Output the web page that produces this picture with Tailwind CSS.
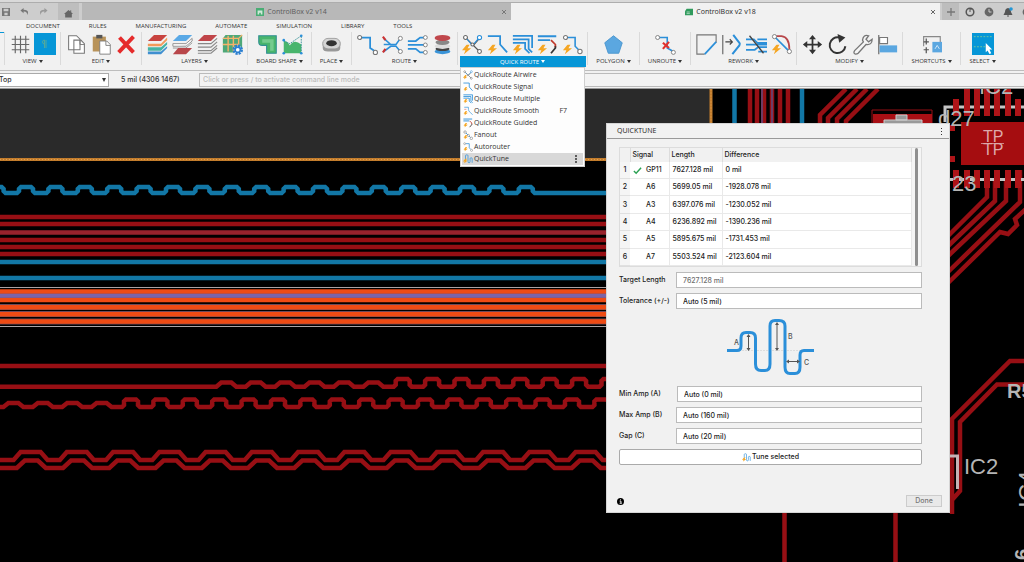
<!DOCTYPE html>
<html lang="en">
<head>
<meta charset="utf-8">
<title>ControlBox v2 v18</title>
<script src="https://cdn.jsdelivr.net/npm/@tailwindcss/browser@4"></script>
</head>
<body class="h-screen overflow-hidden flex flex-col bg-black font-['Open_Sans','Noto_Sans',sans-serif] text-[#333] text-[7px] leading-[10px]">

<!-- shared icon pieces -->
<svg class="hidden">
  <symbol id="bolt" viewBox="0 0 10 10"><path d="M5 0 0 6h3.600L2 10l7.500-6H5.800L8 0z" fill="#f5a623"/></symbol>
  <symbol id="airwire" viewBox="0 0 24 24"><path d="M5 5 20 20M13 13 20 5" stroke="#555" stroke-width="1.400" fill="none"/><path d="M5 5l7 8 7-8" stroke="#2b8fd9" stroke-width="1.300" fill="none"/><g fill="#fff" stroke="#666" stroke-width="1.200"><circle cx="4" cy="4" r="2.200"/><circle cx="20" cy="4" r="2.400" stroke="#2b8fd9"/><circle cx="20" cy="20" r="2.200"/><circle cx="12" cy="12" r="1.800"/></g><use href="#bolt" x="0" y="12" width="11" height="11"/></symbol>
  <symbol id="signal" viewBox="0 0 24 24"><path d="M1 2.500H15V12l8 9" stroke="#2b8fd9" stroke-width="2" fill="none"/><use href="#bolt" x="1" y="12" width="11" height="11"/></symbol>
  <symbol id="multiple" viewBox="0 0 24 24"><path d="M1 2H23V16M1 6H19V17l4 4M1 10H15v7l5 5" stroke="#2b8fd9" stroke-width="2" fill="none"/><use href="#bolt" x="1" y="12" width="11" height="11"/></symbol>
  <symbol id="guided" viewBox="0 0 24 24"><path d="M1 2.500H22M1 7H15" stroke="#2b8fd9" stroke-width="2.200" fill="none"/><path d="M16 7l5 5v3" stroke="#c0392b" stroke-width="2" fill="none"/><path d="M21 14v2l-5 6" stroke="#333" stroke-width="2" fill="none"/><use href="#bolt" x="1" y="12" width="11" height="11"/></symbol>
  <symbol id="auto" viewBox="0 0 24 24"><path d="M6 4H15V14l4 4" stroke="#2b8fd9" stroke-width="1.800" fill="none"/><g fill="#fff" stroke="#777" stroke-width="1.200"><circle cx="4" cy="4" r="2.300"/><circle cx="20.500" cy="20" r="2.500"/></g><use href="#bolt" x="1" y="12" width="11" height="11"/></symbol>
  <symbol id="fanout" viewBox="0 0 24 24"><path d="M5 5l14 14" stroke="#2b8fd9" stroke-width="2" fill="none"/><g fill="#fff" stroke="#777" stroke-width="1.400"><circle cx="5" cy="5" r="3"/><circle cx="13" cy="13" r="2.500"/><circle cx="20" cy="20" r="3"/></g><use href="#bolt" x="1" y="12" width="11" height="11"/></symbol>
  <symbol id="smooth" viewBox="0 0 24 24"><path d="M3 3h10v5q0 4 4 7l6 6" stroke="#2b8fd9" stroke-width="1.600" fill="none"/><path d="M3 8h5" stroke="#d66" stroke-width="1.500"/><use href="#bolt" x="1" y="12" width="11" height="11"/></symbol>
  <symbol id="tune" viewBox="0 0 24 24"><path d="M6 13V4q0-2 3-2t3 2v14q0 3 2.500 3t2.500-3v-7q0-2 2.500-2t2.500 2v10" stroke="#2b8fd9" stroke-width="1.700" fill="none"/><use href="#bolt" x="0" y="11" width="12" height="12"/></symbol>
</svg>

<!-- document tabs -->
<header class="flex shrink-0 h-5 pt-[2px] bg-[#d9d9d9]">
  <div class="flex flex-1 border-t border-[#adadad] bg-[#cdcdcd]">
    <div class="flex items-center gap-[10px] w-[58px] pl-[2px] text-[#777]">
      <button aria-label="Save"><svg class="size-2" viewBox="0 0 10 10"><path d="M0 0h10v10H0z" fill="#777"/><path d="M2 1h6v3H2zM3 6h4v3H3z" fill="#ccc"/></svg></button>
      <button aria-label="Undo"><svg class="size-[9px]" viewBox="0 0 10 10"><path d="M4 1 0.500 4 4 7V5q4-.500 4 4 3-6-4-6z" fill="#777"/></svg></button>
      <button aria-label="Redo"><svg class="size-[9px]" viewBox="0 0 10 10"><path d="M6 1l3.500 3L6 7V5q-4-.500-4 4-3-6 4-6z" fill="#999"/></svg></button>
    </div>
    <button aria-label="Home" class="flex w-[21px] items-center justify-center bg-[#bebebe]"><svg class="mt-1 size-[9px]" viewBox="0 0 10 10"><path d="M5 1 0 5.500h1.300V9.500h7.400V5.500H10L8 3.700V1.500H7v1.300z" fill="#666"/></svg></button>
    <div class="ml-[3px] flex flex-1 items-center bg-[#b8b8b8] pr-1">
      <div class="flex flex-1 items-center justify-center gap-[3px] font-['Noto_Sans',sans-serif] text-[#5f5f5f]"><svg class="size-2" viewBox="0 0 10 10"><path d="M0 0h10v10H0z" fill="#49ad74"/><path d="M2 3h6v5H6V6H4v2H2z" fill="#cfe8d9"/></svg><a href="#">ControlBox v2 v14</a></div>
      <button aria-label="Close tab"><svg class="size-[6px]" viewBox="0 0 6 6"><path d="M1 1l4 4M5 1 1 5" stroke="#777"/></svg></button>
    </div>
    <div class="flex flex-1 items-center bg-[#f1f1f1] pr-1">
      <div class="flex flex-1 items-center justify-center gap-[3px] font-['Noto_Sans',sans-serif]"><svg class="size-2" viewBox="0 0 10 10"><path d="M2 1h8v8H0V4z" fill="#2f9a5c"/><path d="M2 5h4M2 7h4" stroke="#bfe2cd"/></svg><a href="#">ControlBox v2 v18</a></div>
      <button aria-label="Close tab"><svg class="size-[6px]" viewBox="0 0 6 6"><path d="M1 1l4 4M5 1 1 5" stroke="#666"/></svg></button>
    </div>
    <div class="flex w-[84px] shrink-0 items-center gap-[9px] pl-[2px] [&>button]:shrink-0">
      <button aria-label="New tab" class="flex h-full w-[17px] items-center justify-center bg-[#bdbdbd]"><svg class="size-2" viewBox="0 0 8 8"><path d="M4 0v8M0 4h8" stroke="#777" stroke-width="1.300"/></svg></button>
      <button aria-label="Extensions" class="-ml-[3px]"><svg class="size-[10px]" viewBox="0 0 10 10"><circle cx="5" cy="5" r="3.800" fill="none" stroke="#555" stroke-width="1.500"/><path d="M5 5V2h2" stroke="#555" fill="none"/></svg></button>
      <button aria-label="Job status"><svg class="size-[10px]" viewBox="0 0 10 10"><circle cx="5" cy="5" r="4.400" fill="#666"/><path d="M5 2v3h2.500" stroke="#ccc" fill="none"/></svg></button>
      <button aria-label="Notifications"><svg class="size-[10px]" viewBox="0 0 10 10"><path d="M5 1Q2 1.500 2 5L.500 8h9L8 5Q8 1.500 5 1zM4 8.500h2v1H4z" fill="#555"/><circle cx="8" cy="2" r="1.800" fill="#2196d6"/></svg></button>
      <button aria-label="Account"><svg class="size-[10px]" viewBox="0 0 10 10"><circle cx="5" cy="5" r="4.400" fill="#666"/></svg></button>
    </div>
  </div>
</header>

<!-- ribbon -->
<nav class="flex shrink-0 h-3 items-center gap-[29px] bg-[#f1f1f1] pl-[26px] text-[6px]">
  <a href="#">DOCUMENT</a><a href="#">RULES</a><a href="#">MANUFACTURING</a><a href="#">AUTOMATE</a><a href="#">SIMULATION</a><a href="#">LIBRARY</a><a href="#">TOOLS</a>
</nav>
<section class="relative z-10 flex shrink-0 h-[39px] border-b border-[#bdbdbd] bg-[#f1f1f1] text-center text-[6px] [&>div]:flex [&>div]:shrink-0 [&>div]:flex-col [&>div]:items-center [&>div>div]:flex [&>div>div]:gap-[2px] [&>div>div]:h-6 [&>div>div]:items-center [&_svg.i]:size-[21px] [&_svg.i]:mx-[1px] [&_button]:whitespace-nowrap [&_i.a]:ml-[2px] [&_i.a]:inline-block [&_i.a]:align-middle [&_i.a]:border-x-[2px] [&_i.a]:border-t-[3px] [&_i.a]:border-x-transparent [&>i]:w-px [&>i]:h-[33px] [&>i]:bg-[#dadada] [&>i]:shrink-0">
  <div class="w-1"><b class="h-px w-full bg-[#0696d7]"></b></div><i></i>
  <div class="w-[55px]"><div>
    <svg class="i" viewBox="0 0 24 24"><path d="M6 2v20M12 2v20M18 2v20M2 6h20M2 12h20M2 18h20" stroke="#666" stroke-width="1.300"/></svg>
    <button aria-label="Snap" class="flex size-[22px] items-center justify-center bg-[#0696d7]"><svg class="size-3" viewBox="0 0 12 12"><path d="M7 2v8M5.500 2v8M5.500 2q-2 0-2 2t2 2" stroke="#54a99b" fill="none"/></svg></button>
  </div><button>VIEW<i class="a"></i></button></div><i></i>
  <div class="w-[80px]"><div>
    <svg class="i" viewBox="0 0 24 24"><path d="M3 2h9l4 4v12H3zM9 7h8l4 4v11H9z" fill="#fff" stroke="#777" stroke-width="1.200"/><path d="M16 7v5h5" fill="none" stroke="#777"/></svg>
    <svg class="i" viewBox="0 0 24 24"><path d="M2 3h15v17H2z" fill="#b8935a"/><path d="M6 1h7v4H6z" fill="#555"/><path d="M10 8h8l4 4v11H10z" fill="#fff" stroke="#777"/><path d="M17 8v5h5" fill="none" stroke="#777"/></svg>
    <svg class="i" viewBox="0 0 24 24"><path d="M4 4l16 17M20 3 3 21" stroke="#e52b2b" stroke-width="4.500"/></svg>
  </div><button>EDIT<i class="a"></i></button></div><i></i>
  <div class="w-[105px]"><div>
    <svg class="i" viewBox="0 0 24 24"><path d="M8 1h15l-7 7H1z" fill="#c8433f"/><path d="M1 11h15l7-7v3l-7 7H1z" fill="#f39a5b"/><path d="M1 15h15l7-6v3l-7 7H1z" fill="#46b4a5"/><path d="M1 20h15l7-6v2l-7 7H1z" fill="#3f8fd0"/></svg>
    <svg class="i" viewBox="0 0 24 24"><path d="M8 1h15l-7 7H1z" fill="#5aa9e6"/><path d="M1 11h15l7-6v3l-7 6H1z M1 16h15l7-6" fill="#fff" stroke="#888"/><path d="M7 16h16l-7 7H1z" fill="#b8474b"/></svg>
    <svg class="i" viewBox="0 0 24 24"><path d="M8 1h15l-7 7H1z" fill="#c04549"/><path d="M1 11h15l7-6M1 15h15l7-6M1 19h15l7-6M1 22h15l7-6" fill="none" stroke="#888" stroke-width="1.300"/></svg>
    <svg class="i" viewBox="0 0 24 24"><path d="M4 1h19v16l-4 4H1V5z" fill="#4da878"/><path d="M1 5h18v16M19 5l4-4M7 2v18M13 2v18M1 12h18" stroke="#f6b26b" stroke-width="1.600" fill="none"/><circle cx="18" cy="18" r="4.500" fill="#fff" stroke="#2b7fd0" stroke-width="3" stroke-dasharray="2.400 1.100"/><circle cx="18" cy="18" r="3" fill="none" stroke="#2b7fd0" stroke-width="1.800"/></svg>
  </div><button>LAYERS<i class="a"></i></button></div><i></i>
  <div class="w-[63px]"><div>
    <svg class="i" viewBox="0 0 24 24"><path d="M2 2h20v20H11V13H6q-4 0-4-4z" fill="#48b56c" stroke="#2f8f93" stroke-width="1.200"/><path d="M6 6h13v13h-4v-9H6z" fill="#75cb8f"/></svg>
    <svg class="i" viewBox="0 0 24 24"><path d="M2 22V8q4 0 7 5Q14 5 22 12v10z" fill="#48b56c"/><path d="M2 8l7 3L22 2V22" stroke="#2f8f93" stroke-dasharray="2 1" fill="none"/><g fill="#2b8fd9"><circle cx="2" cy="7" r="1.500"/><circle cx="22" cy="2" r="1.500"/><circle cx="2" cy="22" r="1.500"/><circle cx="22" cy="22" r="1.500"/></g></svg>
  </div><button>BOARD SHAPE<i class="a"></i></button></div><i></i>
  <div class="w-[39px]"><div>
    <svg class="i" viewBox="0 0 24 24"><path d="M2 9v7q0 4 6 4h8q6 0 6-4V9z" fill="#999"/><rect x="2" y="5" width="20" height="12" rx="6" fill="#d5d5d5" stroke="#999"/><ellipse cx="12" cy="10.500" rx="6" ry="3.500" fill="#333"/></svg>
  </div><button>PLACE<i class="a"></i></button></div><i></i>
  <div class="w-[105px]"><div>
    <svg class="i" viewBox="0 0 24 24"><path d="M4 4h11v12l6 4" stroke="#2b8fd9" stroke-width="2" fill="none"/><g fill="#fff" stroke="#777" stroke-width="1.200"><circle cx="3" cy="4" r="2.300"/><circle cx="21" cy="21" r="2.400"/></g></svg>
    <svg class="i" viewBox="0 0 24 24"><path d="M2 5l8 7h6l5-7M2 20l8-6h6l5 6M2 12h8" stroke="#2b8fd9" stroke-width="1.800" fill="none"/><path d="M1 3l3 4M1 21l3-4" stroke="#c33" stroke-width="2.500"/><g fill="#fff" stroke="#777"><circle cx="21" cy="5" r="2.300"/><circle cx="21" cy="20" r="2.300"/></g></svg>
    <svg class="i" viewBox="0 0 24 24"><path d="M1 8h9l5-4h5M1 12.500h19M1 17h9l5 4h5" stroke="#2b8fd9" stroke-width="2" fill="none"/><g fill="#fff" stroke="#777"><circle cx="21" cy="4" r="2.200"/><circle cx="21" cy="12.500" r="2.200"/><circle cx="21" cy="21" r="2.200"/></g></svg>
    <svg class="i" viewBox="0 0 24 24"><rect x="8" y="4" width="8" height="17" fill="#999"/><ellipse cx="12" cy="20" rx="9" ry="3" fill="#3a94d8"/><ellipse cx="12" cy="17" rx="8" ry="2.500" fill="#444"/><ellipse cx="12" cy="14" rx="9" ry="3" fill="#ddd"/><ellipse cx="12" cy="9.500" rx="8" ry="3" fill="#888"/><ellipse cx="12" cy="4.500" rx="9" ry="3.500" fill="#c0474c"/></svg>
  </div><button>ROUTE<i class="a"></i></button></div><i></i>
  <div class="relative w-[129px]"><div>
    <svg class="i"><use href="#airwire"/></svg><svg class="i"><use href="#signal"/></svg><svg class="i"><use href="#multiple"/></svg><svg class="i"><use href="#guided"/></svg><svg class="i"><use href="#auto"/></svg>
  </div><button class="h-[11px] w-[126px] bg-[#0696d7] text-white">QUICK ROUTE<i class="a"></i></button>
    <ul class="absolute top-[35px] left-[2px] w-[125px] border border-[#cfcfcf] bg-[#fdfdfd] p-px text-left text-[7px] leading-[12px] [&_button]:flex [&_button]:h-3 [&_button]:w-full [&_button]:items-center [&_button]:gap-px [&_button]:pl-px [&_svg]:size-[10px]">
      <li><button><svg><use href="#airwire"/></svg>QuickRoute Airwire</button></li>
      <li><button><svg><use href="#signal"/></svg>QuickRoute Signal</button></li>
      <li><button><svg><use href="#multiple"/></svg>QuickRoute Multiple</button></li>
      <li><button><svg><use href="#smooth"/></svg>QuickRoute Smooth<span class="ml-auto pr-4">F7</span></button></li>
      <li><button><svg><use href="#guided"/></svg>QuickRoute Guided</button></li>
      <li><button><svg><use href="#fanout"/></svg>Fanout</button></li>
      <li><button><svg><use href="#auto"/></svg>Autorouter</button></li>
      <li><button class="bg-[#d8d8d8]"><svg><use href="#tune"/></svg>QuickTune<span class="ml-auto flex flex-col gap-px pr-[6px]"><b class="size-[2px] rounded-full bg-[#333]"></b><b class="size-[2px] rounded-full bg-[#333]"></b><b class="size-[2px] rounded-full bg-[#333]"></b></span></button></li>
    </ul>
  </div><i></i>
  <div class="w-[51px]"><div><svg class="i" viewBox="0 0 24 24"><path d="M12 2l10 8-4 12H6L2 10z" fill="#5ba7e0" stroke="#4592cd"/></svg></div><button>POLYGON<i class="a"></i></button></div><i></i>
  <div class="w-[50px]"><div><svg class="i" viewBox="0 0 24 24"><path d="M4 4h10v12l7 4" stroke="#2b8fd9" stroke-width="1.800" fill="none"/><g fill="#fff" stroke="#777"><circle cx="3" cy="4" r="2.300"/><circle cx="21" cy="21" r="2.300"/></g><path d="M9 10l7 6M16 9l-7 8" stroke="#e0322f" stroke-width="2.500"/></svg></div><button>UNROUTE<i class="a"></i></button></div><i></i>
  <div class="w-[105px]"><div>
    <svg class="i" viewBox="0 0 24 24"><path d="M10 23H1V1h22v9" stroke="#777" stroke-width="1.300" fill="none"/><path d="M23 9 10 23" stroke="#2b8fd9" stroke-width="2"/></svg>
    <svg class="i" viewBox="0 0 24 24"><path d="M2 1v22" stroke="#777" stroke-width="1.500"/><path d="M14 1l7 9q1 1 0 3l-8 10" stroke="#2b8fd9" stroke-width="2.300" fill="none"/><path d="M5 9h8M10 6l3 3-3 3" stroke="#444" stroke-width="1.300" fill="none"/></svg>
    <svg class="i" viewBox="0 0 24 24"><path d="M0 6h9l4 4h11M0 12h24M0 18h10l4-3h10M13 6h11M14 20h10" stroke="#2b8fd9" stroke-width="2" fill="none"/><path d="M4 2l16 20" stroke="#444" stroke-width="1.500"/></svg>
    <svg class="i" viewBox="0 0 24 24"><path d="M5 4l15 15" stroke="#2b8fd9" stroke-width="2"/><path d="M6 2.500h6q9 1 9 15" stroke="#b8474b" stroke-width="2" fill="none"/><g fill="#fff" stroke="#777"><circle cx="4" cy="3" r="2.400"/><circle cx="21" cy="20" r="2.400"/></g><use href="#bolt" x="1" y="12" width="11" height="11"/></svg>
  </div><button>REWORK<i class="a"></i></button></div><i></i>
  <div class="w-[105px]"><div>
    <svg class="i" viewBox="0 0 24 24"><path d="M12 4v16M4 12h16" stroke="#333" stroke-width="2"/><path d="M12 1l4 5H8zM12 23l4-5H8zM1 12l5-4v8zM23 12l-5-4v8z" fill="#333"/></svg>
    <svg class="i" viewBox="0 0 24 24"><path d="M14 4A9 9 0 1 0 21 14" stroke="#333" stroke-width="2.200" fill="none"/><path d="M12 0l9 4-7 6z" fill="#333"/></svg>
    <svg class="i" viewBox="0 0 24 24"><path d="M19 2q-6-2-7 5l1 2-10 10q-2 3 1 4 2 0 3-1l9-10q7 1 7-6l-4 3-3-3z" fill="#f5f5f5" stroke="#777" stroke-width="1.500"/></svg>
    <svg class="i" viewBox="0 0 24 24"><path d="M2 1v22" stroke="#777" stroke-width="1.500"/><path d="M3 4h9v7H3z" fill="#fff" stroke="#777" stroke-width="1.300"/><path d="M3 13h20v8H3z" fill="#5ba7e0"/></svg>
  </div><button>MODIFY<i class="a"></i></button></div><i></i>
  <div class="w-[57px]"><div><svg class="i" viewBox="0 0 24 24"><path d="M3 14V3h19v6" stroke="#888" stroke-width="1.300" fill="none"/><path d="M6 5v7M3 9h6M6 15v7M3 18h6" stroke="#555" stroke-width="1.400"/><path d="M13 9h11v12H13z" fill="#5ba7e0"/><path d="M16 17l2.500-4 2.500 4" stroke="#dceefb" fill="none"/></svg></div><button>SHORTCUTS<i class="a"></i></button></div><i></i>
  <div class="w-[43px]"><div><svg class="size-[22px]" viewBox="0 0 24 24"><path d="M0 0h24v24H0z" fill="#0696d7"/><path d="M2 4h20M2 15h13" stroke="#76c49a" stroke-dasharray="2 1.500"/><path d="M15 11v10l2-2 2 4 2-1-2-4h3z" fill="#fff"/></svg></div><button>SELECT<i class="a"></i></button></div>
</section>

<!-- layer and command line -->
<form class="flex shrink-0 h-[18px] items-center border-b border-[#999] bg-[#f1f1f1] font-['Inter',sans-serif] font-medium">
  <div class="relative h-[14px] w-[110px]"><select aria-label="Layer" class="-ml-px h-full w-full appearance-none border border-[#aaa] border-l-0 bg-white"><option>Top</option></select><svg class="absolute top-[5px] right-1 size-1" viewBox="0 0 4 4"><path d="M0 0h4L2 4z" fill="#333"/></svg></div>
  <output class="w-[89px] pl-[11px]">5 mil (4306 1467)</output>
  <input aria-label="Command line" placeholder="Click or press / to activate command line mode" class="h-[14px] min-w-0 flex-1 border border-r-0 border-[#bbb] bg-[#f3f3f3] px-[3px] placeholder:text-[#bcbcbc]">
</form>

<!-- board canvas -->
<main class="relative min-h-0 flex-1 overflow-hidden bg-black">
  <svg class="absolute top-0 left-0 h-[473px] w-[1024px]" viewBox="0 89 1024 473" fill="none">
    <path d="M0 89H710V159H0z" fill="#2a2a2a"/>
    <path d="M0 159.500H711V89" stroke="#c27c2c" stroke-width="3"/><path d="M0 159.500H711V89" stroke="#e0a050" stroke-dasharray="1 2"/>
    <g stroke="#970f14" stroke-width="4.500">
      <path d="M0 217H610M0 224H610M0 240H610M0 247H610M0 254H610M0 366H610"/>
      <path d="M0 232.500H610" stroke="#98222c"/>
      <path id="wave-b"/><path id="wave-c"/><path id="wave-d"/><path id="wave-e"/>
    </g>
    <path d="M0 262H610M0 278H610" stroke="#1277a6" stroke-width="4.500"/>
    <path id="wave-a" stroke="#1277a6" stroke-width="4.500"/>
    <path d="M0 287.500H610M0 326.500H610" stroke="#a9a3a5"/>
    <path d="M0 296H610M0 307H610M0 314H610M0 321.500H610" stroke="#6d4a5a" stroke-width="6"/>
    <path d="M0 291.500H610M0 300H610M0 307.300H610M0 314.300H610M0 321.500H610" stroke="#ee4b14" stroke-width="4.500"/>
    <path d="M0 295.800H610" stroke="#7b64a8" stroke-width="4"/>

    <!-- traces above the dialog -->
    <path d="M734.500 89V124M802 89V124" stroke="#1277a6" stroke-width="4.500"/>
    <g stroke="#970f14" stroke-width="4.500">
      <path d="M750 89V124M757 89V124M764 89V124M772 89V124M780 89V124M788 89V124"/>
      <path d="M820 124V115L846 89M828 124V118L857 89M837 124V119L867 89M846 124V121L878 89"/>
      <path d="M987 180V197L948 236M995 180V201L948 246M1006 180V201L948 256M1020 170V202L948 272M1026 209l-11 10 2 6-9 9-8-2-52 51"/>
      <path d="M1026 361H1010L952 419V514M1026 384.500H997L960 422V491L952 500"/>
      <path d="M784.500 510V562M895.500 510V562"/>
    </g>
    <path d="M762 89V124M772 89V124" stroke="#6c3c66" stroke-width="2"/>
    <path d="M872 124V110H932V124" stroke="#970f14"/>
    <path d="M873 114H932V124H873z" fill="#a90f14"/>
    <path d="M884 124V120H922V124M896 115h11v5h-11z" stroke="#ccc" fill="#999"/>
    <path d="M945 122V107H1024M950 179.500H1024" stroke="#c4c4c4" stroke-width="3"/>
    <path d="M961 122H1024V165H961z" fill="#a50d10"/>
    <path d="M956 99V116M967 89V116M977 89V116M987 89V116M997 89V116M1008 89V116M1018 99V116M956 170V188M967 170V188M977 170V188M987 170V188M997 170V188M1008 170V188M1018 170V188M948 128H955M948 159H955" stroke="#ae1418" stroke-width="6"/>
    <path d="M981 143.500H1004" stroke="#cf8486"/>
    <path d="M950 456H957.500V489" stroke="#c6b3b5" stroke-width="3"/>
    <g class="font-['Liberation_Sans',sans-serif]" fill="#b5b5b5" font-size="22">
      <text x="979" y="94">IC2</text>
      <text x="938" y="126">d27</text>
      <text x="952" y="191">23</text>
      <g font-size="16" fill="#dda9aa"><text x="983" y="142">TP</text><text x="983" y="155">TP</text></g>
      <text x="964" y="474">IC2</text>
      <text x="1007" y="398" font-size="20" font-weight="bold">R5</text>
      <text transform="translate(1036 508) rotate(-90)" font-size="24">IC4</text>
      <text transform="translate(1029 560) rotate(-90)" font-size="20" font-weight="bold">6</text>
    </g>
  </svg>

  <!-- QuickTune dialog -->
  <section role="dialog" aria-label="QuickTune" class="absolute top-[34px] left-[606px] flex w-[344px] flex-col border border-[#d5d5d5] bg-[#f1f1f1] font-['Inter',sans-serif] font-medium text-[#222]">
    <div class="flex h-[15px] items-center border-b border-[#999] pr-[7px] pl-[10px] font-['Open_Sans',sans-serif] font-normal"><h1 class="flex-1">QUICKTUNE</h1><button aria-label="Options" class="flex flex-col gap-[2px]"><b class="size-[1px] bg-[#333]"></b><b class="size-[1px] bg-[#333]"></b><b class="size-[1px] bg-[#333]"></b></button></div>
    <div class="px-3 pt-2">
      <div class="mr-[15px] flex h-[120px] border border-[#dcdcdc] bg-[#f5f5f5]">
        <table class="h-full flex-1 table-fixed border-collapse text-left [&_td]:border-r [&_td]:border-b [&_td]:border-[#e9e9e9] [&_td]:bg-white [&_td]:pl-[3px] [&_th]:font-medium [&_tbody_th]:border-b [&_tbody_th]:border-[#e0e0e0] [&_tbody_th]:text-center [&_thead_th]:h-[14px] [&_thead_th]:border-r [&_thead_th]:border-[#dcdcdc] [&_thead_th]:bg-[#f1f1f1] [&_thead_th]:pl-[2px]">
          <colgroup><col class="w-[10px]"><col class="w-[39px]"><col class="w-[53px]"><col></colgroup>
          <thead><tr><th></th><th>Signal</th><th>Length</th><th>Difference</th></tr></thead>
          <tbody>
            <tr><th>1</th><td><span class="flex items-center gap-1"><svg class="size-[9px]" viewBox="0 0 10 10"><path d="M1 5.500 3.500 8 9 2" stroke="#2aa052" stroke-width="1.600" fill="none"/></svg>GP11</span></td><td>7627.128 mil</td><td>0 mil</td></tr>
            <tr><th>2</th><td><span class="pl-[13px]">A6</span></td><td>5699.05 mil</td><td>-1928.078 mil</td></tr>
            <tr><th>3</th><td><span class="pl-[13px]">A3</span></td><td>6397.076 mil</td><td>-1230.052 mil</td></tr>
            <tr><th>4</th><td><span class="pl-[13px]">A4</span></td><td>6236.892 mil</td><td>-1390.236 mil</td></tr>
            <tr><th>5</th><td><span class="pl-[13px]">A5</span></td><td>5895.675 mil</td><td>-1731.453 mil</td></tr>
            <tr><th>6</th><td><span class="pl-[13px]">A7</span></td><td>5503.524 mil</td><td>-2123.604 mil</td></tr>
          </tbody>
        </table>
        <div class="flex w-[9px] justify-center"><div class="w-[3px] rounded bg-[#8f8f8f]"></div></div>
      </div>
      <div class="mt-[5px] mr-[15px] grid grid-cols-[57px_1fr] items-center gap-y-[5px] [&_input]:h-4 [&_input]:min-w-0 [&_input]:border [&_input]:border-[#bbb] [&_input]:bg-white [&_input]:pl-[6px]">
        <label for="target" class="whitespace-nowrap">Target Length</label><input id="target" value="7627.128 mil" class="text-[#707070]">
        <label for="tol" class="whitespace-nowrap">Tolerance (+/-)</label><input id="tol" value="Auto (5 mil)">
        <svg class="col-span-2 ml-[105px] h-[67px] w-[94px]" viewBox="724 314 94 67" fill="none">
          <path d="M727 350.500H814" stroke="#ddd" stroke-dasharray="2 1"/>
          <path d="M727 350.500H737Q741 350.500 741 346V338Q741 332.500 746 332.500H750Q755.500 332.500 755.500 338V364Q755.500 370.500 761 370.500H765Q770 370.500 770 364V326Q770 320.500 775 320.500H779Q785 320.500 785 326V367Q785 373.500 790 373.500H795Q800 373.500 800 367V355Q800 350.500 804 350.500H814" stroke="#2b8fd9" stroke-width="3"/>
          <path d="M748.500 336V349M777 324V349M788 361.500H798" stroke="#555"/>
          <path d="M748.500 334l2 3h-4zM748.500 351l2-3h-4zM777 322l2 3h-4zM777 351l2-3h-4zM786 361.500l3-2v4zM800 361.500l-3-2v4z" fill="#555"/>
          <g fill="#555" font-size="7"><text x="734" y="345">A</text><text x="788" y="339">B</text><text x="804" y="365">C</text></g>
        </svg>
        <label for="min">Min Amp (A)</label><input id="min" value="Auto (0 mil)" class="ml-px">
        <label for="max">Max Amp (B)</label><input id="max" value="Auto (160 mil)">
        <label for="gap">Gap (C)</label><input id="gap" value="Auto (20 mil)">
        <button class="col-span-2 flex h-4 items-center justify-center gap-px rounded-[2px] border border-[#aaa] bg-white"><svg class="size-[9px]"><use href="#tune"/></svg>Tune selected</button>
      </div>
    </div>
    <div class="mt-[30px] mb-[5px] flex items-center justify-between pr-[7px] pl-[10px]">
      <button aria-label="Info"><svg class="size-[7px]" viewBox="0 0 8 8"><circle cx="4" cy="4" r="4" fill="#000"/><path d="M3 3.500h1.500V6M3 6h2.500M4 1.500v1" stroke="#fff" fill="none"/></svg></button>
      <button class="h-3 w-9 border border-[#ccc] bg-[#e9e9e9] text-[#777]">Done</button>
    </div>
  </section>
</main>

<script>
// Builds a meander from runs of raised bumps: [first centre, count, top y, top width, ramp width, steep walls].
function meander(id, runs, low, end, period) {
  let d = `M-30 ${low}`;
  for (const [c, n, high, top, ramp, steep] of runs)
    for (let k = 0; k < n; k++) {
      const x = c + k * period, l = x - top / 2, r = x + top / 2, m = ramp / 2;
      d += steep
        ? `H${l - ramp}l${m} ${-m}V${high + m}L${l} ${high}H${r}l${m} ${m}V${low - m}l${m} ${m}`
        : `H${l - ramp}L${l} ${high}H${r}L${r + ramp} ${low}`;
    }
  document.getElementById(id).setAttribute('d', d + `H${end}`);
}
meander('wave-a', [[-3.4, 19, 187, 10, 4, true]], 193, 610, 29.4);
meander('wave-b', [[226.3, 6, 382.5, 10, 5], [402.7, 8, 379, 10, 4, true]], 386.7, 610, 29.4);
meander('wave-c', [[13.4, 4, 403, 10, 5], [131, 17, 399.5, 10, 4, true]], 407, 610, 29.4);
meander('wave-d', [[30.6, 13, 452, 20, 7]], 460, 610, 46.25);
meander('wave-e', [[31.3, 13, 460.5, 13, 8]], 468, 610, 46.25);
</script>
</body>
</html>
